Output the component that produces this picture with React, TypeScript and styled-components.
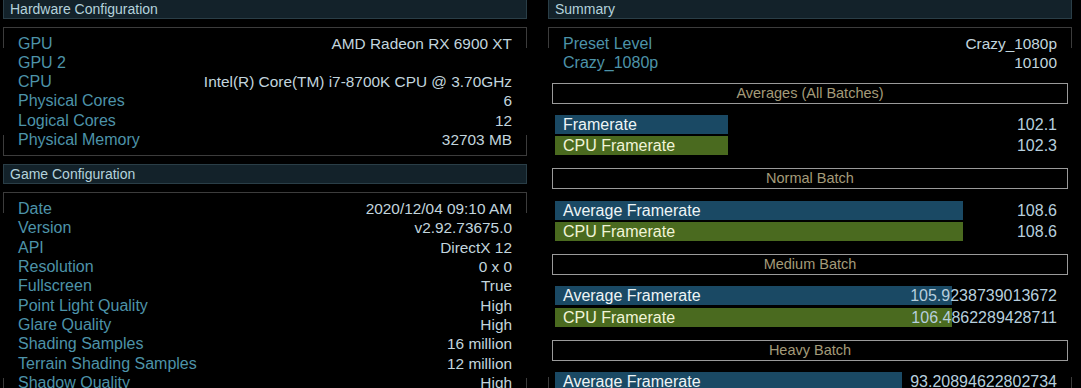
import React from 'react';
import styled, {createGlobalStyle} from "styled-components";

const GlobalStyle = createGlobalStyle`
  html, body {
    margin: 0;
    background: #000;
    overflow: hidden;
  }
  body {
    font-family: "Liberation Sans", Arial, sans-serif;
  }
`

const Page = styled.div`
  display: grid;
  grid-template-columns: 524px 524px;
  column-gap: 21px;
  padding-left: 3px;
  margin-top: -1px;
`

const Column = styled.div`
  display: flex;
  flex-direction: column;
`

const SectionHeader = styled.div`
  box-sizing: border-box;
  height: 20px;
  padding-left: 6px;
  margin-bottom: 8px;
  background: #13222a;
  border: 1px solid #2a3e47;
  color: #b3d2dc;
  font-size: 14px;
  line-height: 18px;
`

const frame = '#3c3c3c'

const Panel = styled.div`
  padding: 5.5px 15px 6px 15px;
  margin-bottom: 8px;
  border-top: 1px solid ${frame};
  border-bottom: 1px solid ${frame};
  background:
    linear-gradient(${frame}, ${frame}) left top / 1px 20px no-repeat,
    linear-gradient(${frame}, ${frame}) right top / 1px 20px no-repeat,
    linear-gradient(${frame}, ${frame}) left bottom / 1px 20px no-repeat,
    linear-gradient(${frame}, ${frame}) right bottom / 1px 20px no-repeat;
`

const InfoRow = styled.div`
  display: flex;
  justify-content: space-between;
  align-items: baseline;
  height: 19.33px;
  line-height: 19.33px;
  white-space: nowrap;
`

const Label = styled.span`
  color: #4d93a9;
  font-size: 16px;
`

const Value = styled.span`
  color: #c2d5de;
  font-size: 15.4px;
`

interface TitleProps {
    $first: boolean;
}

const BatchTitle = styled.div<TitleProps>`
  box-sizing: border-box;
  height: 21px;
  margin: ${props => (props.$first ? '10.6px' : '13.2px')} -11px 0 -11px;
  border: 1px solid #9a9a9a;
  color: #a49b79;
  font-size: 14.5px;
  line-height: 19px;
  text-align: center;
`

const BarList = styled.div`
  display: flex;
  flex-direction: column;
  gap: 2.33px;
  margin: 11.2px 0 0 -8px;
`

const BarRow = styled.div`
  display: grid;
  height: 19px;
  font-size: 16px;
  line-height: 19px;
  white-space: nowrap;
`

interface BarProps {
    $tone: 'gpu' | 'cpu';
}

const Bar = styled.div<BarProps>`
  grid-area: 1 / 1;
  box-sizing: border-box;
  padding-left: 8px;
  background: ${props => (props.$tone === 'gpu' ? '#1a4964' : '#4a6a1f')};
  color: ${props => (props.$tone === 'gpu' ? '#eef5f6' : '#f1f4d8')};
`

const BarValue = styled.span`
  grid-area: 1 / 1;
  justify-self: end;
  color: #b7cfde;
`

const hardware = [
    ['GPU', 'AMD Radeon RX 6900 XT'],
    ['GPU 2', ''],
    ['CPU', 'Intel(R) Core(TM) i7-8700K CPU @ 3.70GHz'],
    ['Physical Cores', '6'],
    ['Logical Cores', '12'],
    ['Physical Memory', '32703 MB'],
]

const game = [
    ['Date', '2020/12/04 09:10 AM'],
    ['Version', 'v2.92.73675.0'],
    ['API', 'DirectX 12'],
    ['Resolution', '0 x 0'],
    ['Fullscreen', 'True'],
    ['Point Light Quality', 'High'],
    ['Glare Quality', 'High'],
    ['Shading Samples', '16 million'],
    ['Terrain Shading Samples', '12 million'],
    ['Shadow Quality', 'High'],
]

const summary = [
    ['Preset Level', 'Crazy_1080p'],
    ['Crazy_1080p', '10100'],
]

interface BarData {
    label: string;
    value: string;
    width: number;
    tone: 'gpu' | 'cpu';
}

const batches: {title: string; bars: BarData[]}[] = [
    {
        title: 'Averages (All Batches)',
        bars: [
            {label: 'Framerate', value: '102.1', width: 173, tone: 'gpu'},
            {label: 'CPU Framerate', value: '102.3', width: 173, tone: 'cpu'},
        ],
    },
    {
        title: 'Normal Batch',
        bars: [
            {label: 'Average Framerate', value: '108.6', width: 408, tone: 'gpu'},
            {label: 'CPU Framerate', value: '108.6', width: 408, tone: 'cpu'},
        ],
    },
    {
        title: 'Medium Batch',
        bars: [
            {label: 'Average Framerate', value: '105.9238739013672', width: 397, tone: 'gpu'},
            {label: 'CPU Framerate', value: '106.4862289428711', width: 397, tone: 'cpu'},
        ],
    },
    {
        title: 'Heavy Batch',
        bars: [
            {label: 'Average Framerate', value: '93.20894622802734', width: 347, tone: 'gpu'},
        ],
    },
]

const Rows = ({items}: {items: string[][]}) => (
    <>
        {items.map(([label, value]) => (
            <InfoRow key={label}>
                <Label>{label}</Label>
                <Value>{value}</Value>
            </InfoRow>
        ))}
    </>
)

const App = () => {
    return (
        <>
            <GlobalStyle/>
            <Page>
                <Column>
                    <SectionHeader>Hardware Configuration</SectionHeader>
                    <Panel>
                        <Rows items={hardware}/>
                    </Panel>
                    <SectionHeader>Game Configuration</SectionHeader>
                    <Panel>
                        <Rows items={game}/>
                    </Panel>
                </Column>
                <Column>
                    <SectionHeader>Summary</SectionHeader>
                    <Panel>
                        <Rows items={summary}/>
                        {batches.map((batch, i) => (
                            <React.Fragment key={batch.title}>
                                <BatchTitle $first={i === 0}>{batch.title}</BatchTitle>
                                <BarList>
                                    {batch.bars.map(bar => (
                                        <BarRow key={bar.label}>
                                            <Bar $tone={bar.tone} style={{width: bar.width}}>{bar.label}</Bar>
                                            <BarValue>{bar.value}</BarValue>
                                        </BarRow>
                                    ))}
                                </BarList>
                            </React.Fragment>
                        ))}
                    </Panel>
                </Column>
            </Page>
        </>
    )
}

export default App
